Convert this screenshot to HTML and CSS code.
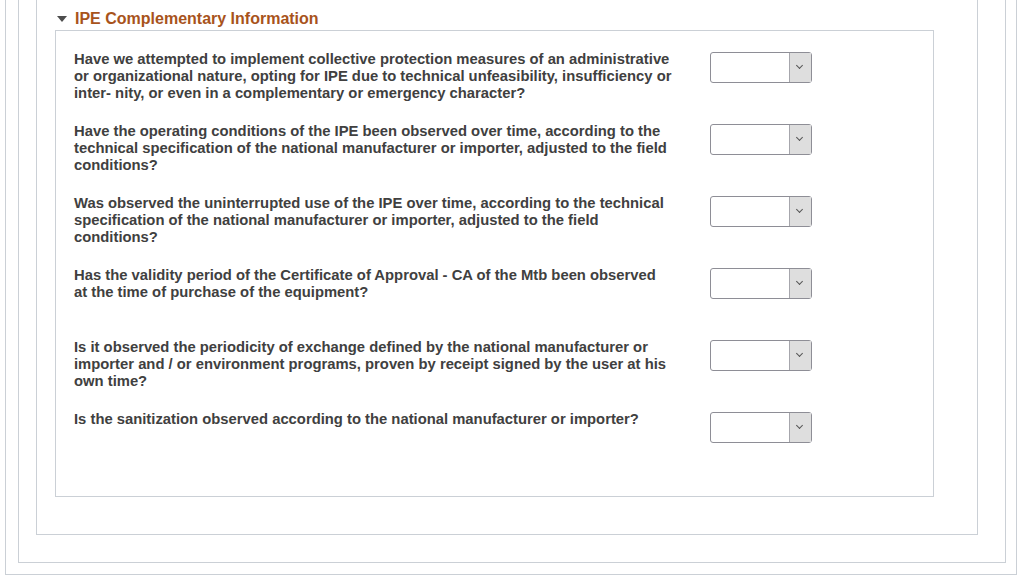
FILE: index.html
```html
<!DOCTYPE html>
<html lang="en">
<head>
  <meta charset="UTF-8">
  <title>IPE Complementary Information</title>
  <link rel="stylesheet" href="styles.css">
</head>
<body>

  <div class="frame">
    <div class="panel">
      <div class="section">
        <div class="group-title">
          <span class="caret"></span>
          IPE Complementary Information
        </div>

        <div class="group-box">
          <div class="q-row">
            <div class="q-text">Have we attempted to implement collective protection measures of an administrative or organizational nature, opting for IPE due to technical unfeasibility, insufficiency or inter- nity, or even in a complementary or emergency character?</div>
            <div class="dropdown"><span class="dd-btn"></span></div>
          </div>
          <div class="q-row">
            <div class="q-text">Have the operating conditions of the IPE been observed over time, according to the technical specification of the national manufacturer or importer, adjusted to the field conditions?</div>
            <div class="dropdown"><span class="dd-btn"></span></div>
          </div>
          <div class="q-row">
            <div class="q-text">Was observed the uninterrupted use of the IPE over time, according to the technical specification of the national manufacturer or importer, adjusted to the field conditions?</div>
            <div class="dropdown"><span class="dd-btn"></span></div>
          </div>
          <div class="q-row">
            <div class="q-text">Has the validity period of the Certificate of Approval - CA of the Mtb been observed at the time of purchase of the equipment?</div>
            <div class="dropdown"><span class="dd-btn"></span></div>
          </div>
          <div class="q-row">
            <div class="q-text">Is it observed the periodicity of exchange defined by the national manufacturer or importer and / or environment programs, proven by receipt signed by the user at his own time?</div>
            <div class="dropdown"><span class="dd-btn"></span></div>
          </div>
          <div class="q-row">
            <div class="q-text">Is the sanitization observed according to the national manufacturer or importer?</div>
            <div class="dropdown"><span class="dd-btn"></span></div>
          </div>
        </div>
      </div>
    </div>
  </div>

</body>
</html>
```

FILE: styles.css
```css
* {
  box-sizing: border-box;
}

body {
  margin: 0;
  font-family: Arial, 'Liberation Sans', sans-serif;
  background: #fff;
}

.frame {
  width: 1012px;
  margin-left: 5px;
  border: 1px solid #cbd0d6;
  border-top: none;
  padding: 0 10px 11px 12px;
}

.panel {
  border: 1px solid #cbd0d6;
  border-top: none;
  padding: 0 27px 27px 17px;
}

.section {
  border: 1px solid #cbd0d6;
  border-top: none;
  padding: 0 43px 37px 18px;
}

.group-title {
  height: 30px;
  display: flex;
  align-items: center;
  padding: 7px 0 0 2px;
  font-size: 16px;
  font-weight: bold;
  color: #a8531b;
}

.caret {
  width: 0;
  height: 0;
  border-left: 5px solid transparent;
  border-right: 5px solid transparent;
  border-top: 6px solid #4d4d4d;
  margin-right: 8px;
  margin-top: 0;
}

.group-box {
  border: 1px solid #cbd0d6;
  padding: 20px 18px 13px 18px;
}

.q-row {
  height: 72px;
  display: flex;
  align-items: flex-start;
}

.q-text {
  width: 598px;
  font-size: 14.8px;
  line-height: 17px;
  font-weight: bold;
  color: #404040;
}

.dropdown {
  position: relative;
  width: 102px;
  height: 31px;
  margin: 1px 0 0 38px;
  border: 1px solid #8e8e96;
  border-radius: 3px;
  background: #fff;
}

.dd-btn {
  position: absolute;
  top: 0;
  right: 0;
  bottom: 0;
  width: 22px;
  background: #dedede;
  border-left: 1px solid #a6a6ac;
}

.dd-btn::after {
  content: "";
  position: absolute;
  left: 7px;
  top: 10px;
  width: 4px;
  height: 4px;
  border-right: 1px solid #555;
  border-bottom: 1px solid #555;
  transform: rotate(45deg);
}
```
